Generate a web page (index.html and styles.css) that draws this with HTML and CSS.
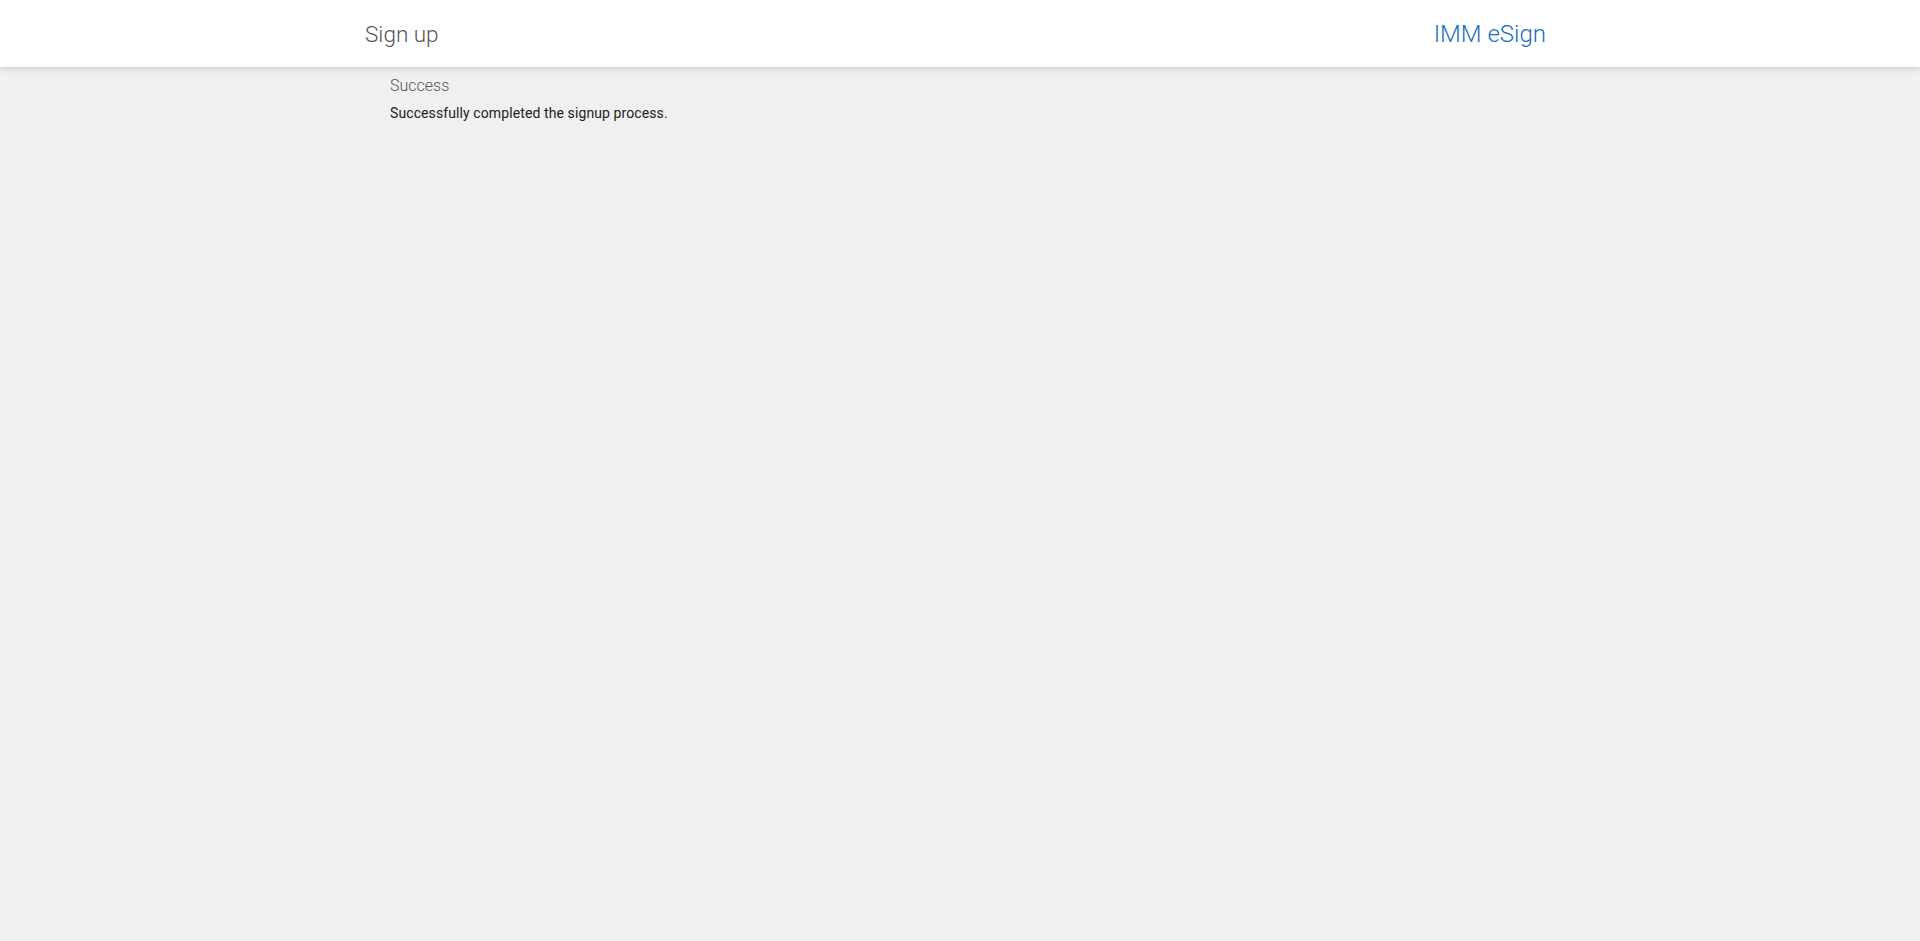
FILE: index.html
```html
<!DOCTYPE html>
<html lang="en">
<head>
<meta charset="utf-8">
<title>Sign up - IMM eSign</title>
<link rel="stylesheet" href="styles.css">
</head>
<body>
<header class="topbar">
  <div class="topbar-inner">
    <h1 class="page-title">Sign up</h1>
    <a class="brand" href="#">IMM eSign</a>
  </div>
</header>
<main class="content">
  <h2 class="status-title">Success</h2>
  <p class="status-text">Successfully completed the signup process.</p>
</main>
</body>
</html>
```

FILE: styles.css
```css
*, *::before, *::after {
  box-sizing: border-box;
}
html, body {
  margin: 0;
  padding: 0;
}
body {
  background: #f0f0f0;
  font-family: Roboto, "Liberation Sans", sans-serif;
  color: #222222;
  min-height: 941px;
}
.topbar {
  background: #ffffff;
  height: 67px;
  box-shadow: 0 2px 6px rgba(0, 0, 0, 0.14);
  position: relative;
}
.topbar-inner {
  max-width: 1200px;
  margin: 0 auto;
  padding: 22px 14px 0 5px;
  display: flex;
  align-items: baseline;
  justify-content: space-between;
}
.page-title {
  margin: 0;
  font-size: 22.5px;
  font-weight: 300;
  color: #555555;
  line-height: 1;
}
.brand {
  font-size: 24px;
  font-weight: 300;
  color: #1a6fc4;
  text-decoration: none;
  line-height: 1;
}
.content {
  width: 1140px;
  margin: 0 auto;
  padding-top: 7px;
}
.status-title {
  margin: 0;
  font-size: 16px;
  font-weight: 300;
  color: #555555;
  line-height: 24px;
}
.status-text {
  margin: 5px 0 0;
  font-size: 14px;
  font-weight: 400;
  color: #222222;
  line-height: 20px;
  letter-spacing: 0.1px;
}
```
